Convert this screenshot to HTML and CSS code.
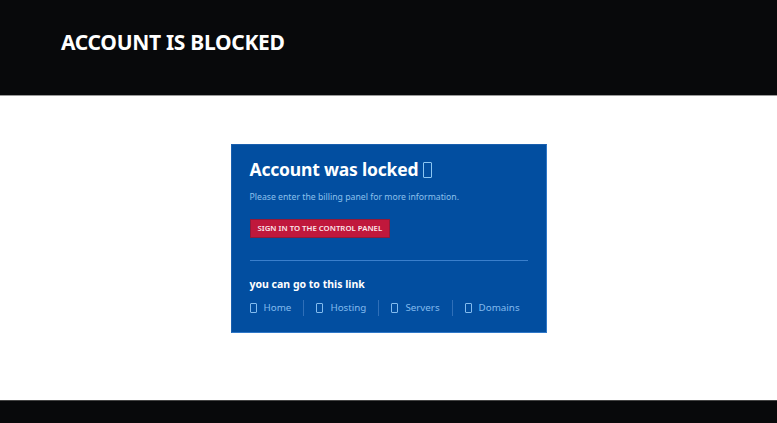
FILE: index.html
```html
<!DOCTYPE html>
<html>
  <head>
    <title>Account is blocked</title>
    <link rel="stylesheet" href="styles.css">
  </head>

  <body>
    <header class="top">
      <h1>Account is blocked</h1>
    </header>

    <main class="content">
      <div class="card">
        <h2>Account was locked <span class="tofu tofu-big"></span></h2>
        <p class="note">Please enter the billing panel for more information.</p>
        <div class="actions">
          <a class="btn" href="#">Sign in to the control panel</a>
        </div>
        <hr class="divider">
        <h3>you can go to this link</h3>
        <nav class="links">
          <a href="#"><span class="tofu"></span>Home</a>
          <a href="#"><span class="tofu"></span>Hosting</a>
          <a href="#"><span class="tofu"></span>Servers</a>
          <a href="#"><span class="tofu"></span>Domains</a>
        </nav>
      </div>
    </main>

    <footer class="bottom"></footer>
  </body>
</html>
```

FILE: styles.css
```css
:root {
  --dark: #08090b;
  --blue: #024ea0;
  --link: #82bbee;
}

html, body {
  margin: 0;
  height: 100%;
}

body {
  font-family: "Noto Sans", "Open Sans", sans-serif;
  display: flex;
  flex-direction: column;
  background: #fff;
}

.top {
  background: var(--dark);
  height: 95px;
  border-bottom: 1px solid #9a9a9a;
  display: flex;
  align-items: center;
  padding-left: 61px;
}
.top h1 {
  margin: 0 0 12px;
  color: #fff;
  font-size: 21px;
  font-weight: 700;
  text-transform: uppercase;
  letter-spacing: -0.3px;
}

.content {
  flex: 1;
  display: flex;
  justify-content: center;
  align-items: flex-start;
  padding-top: 48px;
}

.card {
  width: 278px;
  background: var(--blue);
  border: 1px solid #2f78c8;
  border-top-color: #1a5fae;
  border-left-color: #1a5fae;
  padding: 12px 18px 16px;
}
.card h2 {
  margin: 0;
  color: #fff;
  font-size: 17.5px;
  font-weight: 700;
  letter-spacing: -0.2px;
  display: flex;
  align-items: center;
  gap: 5px;
}

.tofu {
  display: inline-block;
  width: 5px;
  height: 8px;
  border: 1px solid var(--link);
  border-radius: 1px;
  margin-right: 7px;
}
.tofu-big {
  width: 7px;
  height: 14px;
  border-color: #8cc6f2;
  margin: 2px 0 0;
}

.note {
  margin: 10px 0 16px;
  font-size: 8.7px;
  color: #8cc0ec;
}

.actions {
  display: flex;
}
.btn {
  background: #c0183c;
  border: 1px solid #8f1a3a;
  color: #fbe6ea;
  font-size: 7.8px;
  font-weight: 600;
  text-transform: uppercase;
  text-decoration: none;
  padding: 4px 7px;
  line-height: 9px;
}

.divider {
  border: 0;
  border-top: 1px solid #3a7fcc;
  margin: 22px 0 16px;
}

.card h3 {
  margin: 0 0 9px;
  color: #fff;
  font-size: 10.5px;
  font-weight: 700;
}

.links {
  display: flex;
  align-items: center;
}
.links a {
  color: var(--link);
  font-size: 9.8px;
  text-decoration: none;
  display: flex;
  align-items: center;
  padding: 2px 12px;
  border-left: 1px solid #2f6fb8;
  line-height: 12px;
}
.links a:first-child {
  border-left: 0;
  padding-left: 0;
}

.bottom {
  background: var(--dark);
  height: 22px;
  border-top: 1px solid #444;
}
```
